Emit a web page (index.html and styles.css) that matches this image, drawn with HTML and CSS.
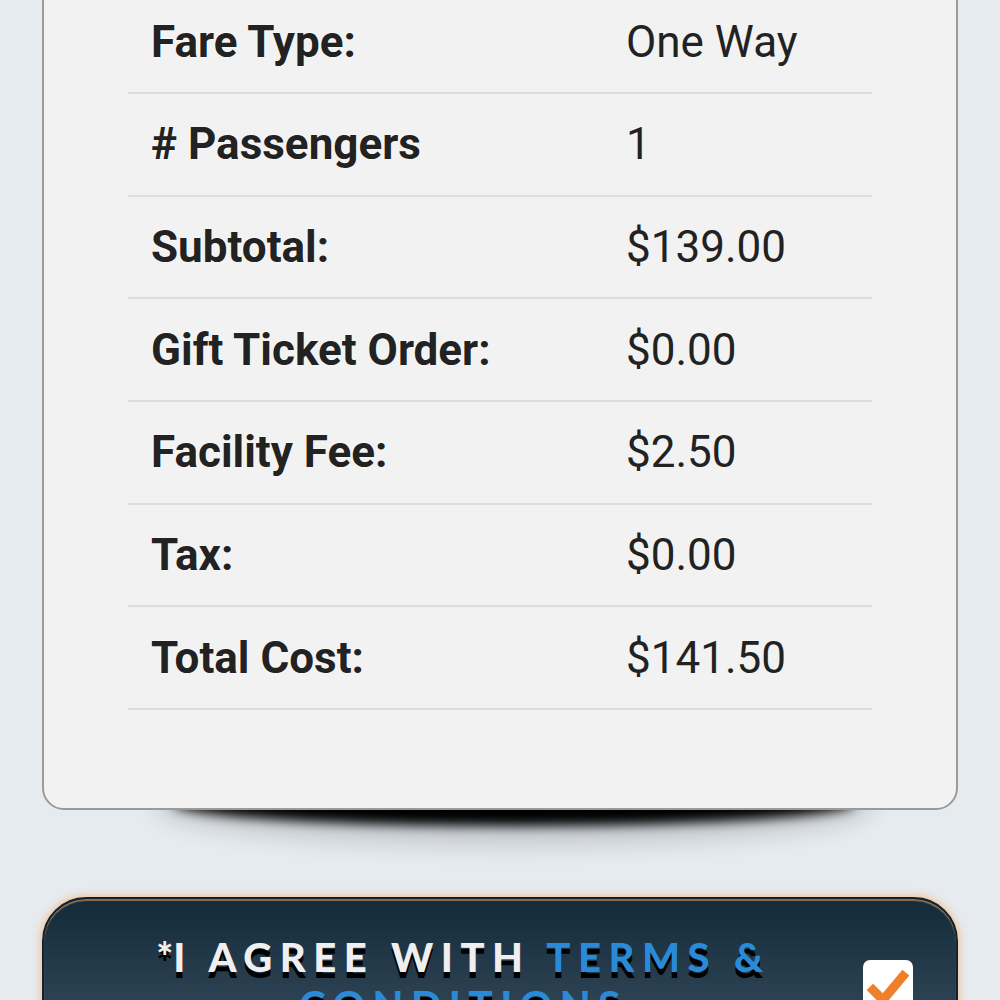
FILE: index.html
```html
<!DOCTYPE html>
<html lang="en">
<head>
  <meta charset="UTF-8" />
  <meta name="viewport" content="width=device-width, initial-scale=1.0"/>
  <title>Order Summary</title>
  <link rel="stylesheet" href="styles.css">
</head>
<body>
  <div class="summary-card">
    <div class="summary-table">
      <div class="row"><span class="label">Fare Type:</span><span class="value">One Way</span></div>
      <div class="row"><span class="label"># Passengers</span><span class="value">1</span></div>
      <div class="row"><span class="label">Subtotal:</span><span class="value">$139.00</span></div>
      <div class="row"><span class="label">Gift Ticket Order:</span><span class="value">$0.00</span></div>
      <div class="row"><span class="label">Facility Fee:</span><span class="value">$2.50</span></div>
      <div class="row"><span class="label">Tax:</span><span class="value">$0.00</span></div>
      <div class="row"><span class="label">Total Cost:</span><span class="value">$141.50</span></div>
    </div>
  </div>

  <label class="agree-box">
    <span class="agree-text"><span class="star">*</span>I agree with <span class="terms">Terms &amp; Conditions</span></span>
    <span class="check">
      <svg viewBox="0 0 50 50" width="50" height="50">
        <path d="M10 30 L20 40 L40 16" fill="none" stroke="#f07f2a" stroke-width="9" stroke-linecap="square" />
      </svg>
    </span>
  </label>
</body>
</html>
```

FILE: styles.css
```css
body {
  margin: 0;
  padding: 0 42px;
  background: #e6ebef;
  font-family: Roboto, "Liberation Sans", sans-serif;
  color: #222222;
}

.summary-card {
  position: relative;
  margin-top: -50.67px;
  background: #f2f2f2;
  border: 2px solid #9a9a9a;
  border-radius: 22px;
  padding: 40px 84px 98px;
}

/* curled shadow under the card */
.summary-card::after {
  content: "";
  position: absolute;
  left: 15%;
  right: 12%;
  bottom: 6px;
  height: 30px;
  border-radius: 50%;
  box-shadow: 0 16px 12px 8px #000000, 0 18px 22px 26px rgba(0, 0, 0, 0.14);
  z-index: -1;
}

.row {
  display: grid;
  grid-template-columns: 475px 1fr;
  border-bottom: 2px solid #dddddd;
  padding: 24.33px 0;
  font-size: 44px;
  line-height: 52px;
}

.label {
  font-weight: bold;
  padding-left: 23px;
  text-shadow: 0 0 2px #ffffff;
}

.value {
  padding-left: 23px;
}

.agree-box {
  display: flex;
  align-items: flex-start;
  margin-top: 87px;
  border: 2px solid #0f2433;
  border-radius: 44px;
  background: linear-gradient(to bottom, #132a3b 0%, #2c4252 100px, #34495a 100%);
  box-shadow: 0 0 7px 2px rgba(255, 170, 100, 0.6), inset 0 2px 1px rgba(200, 140, 80, 0.7);
  padding: 34px 43px 40px 64px;
  gap: 44px;
}

.agree-text {
  flex: 1;
  text-align: center;
  font-family: Lato, "Open Sans", sans-serif;
  font-weight: 900;
  font-size: 40px;
  line-height: 48px;
  letter-spacing: 7.5px;
  text-transform: uppercase;
  color: #efefef;
  text-shadow: 0 6px 0 #000000;
}

.star {
  letter-spacing: 0;
}

.terms {
  color: #2a8ad8;
}

.check {
  flex: none;
  width: 50px;
  height: 50px;
  margin-top: 27px;
  background: #ffffff;
  border-radius: 7px;
}

.check svg {
  display: block;
}
```
